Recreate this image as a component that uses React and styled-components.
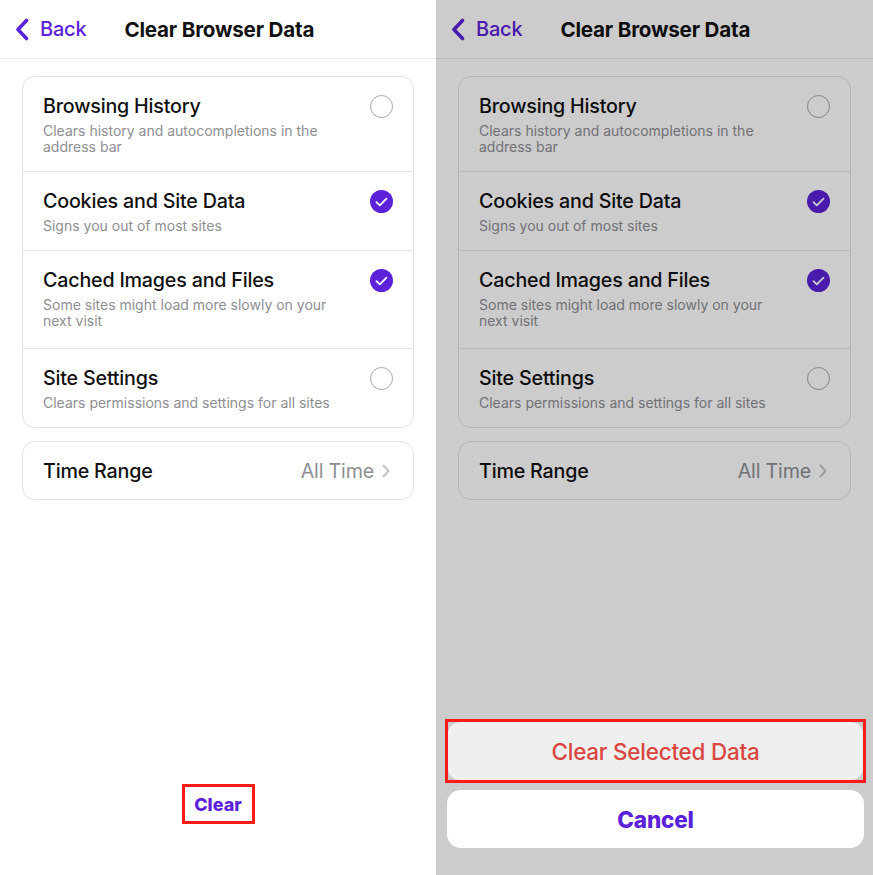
import React from 'react';
import styled, { createGlobalStyle } from 'styled-components';

const purple = '#5b22d9';

const GlobalStyle = createGlobalStyle`
  html, body {
    margin: 0;
    padding: 0;
    background: #ffffff;
    font-family: Inter, "Noto Sans", "Liberation Sans", sans-serif;
    -webkit-font-smoothing: antialiased;
  }
`;

const Page = styled.div`
  display: grid;
  grid-template-columns: 436px 437px;
  width: 873px;
  height: 875px;
  overflow: hidden;
`;

const Screen = styled.div`
  position: relative;
  display: flex;
  flex-direction: column;
  height: 875px;
  background: #ffffff;
  overflow: hidden;
`;

const NavBar = styled.div`
  display: flex;
  align-items: center;
  height: 58px;
  padding-left: 15px;
  border-bottom: 1px solid #ececec;
`;

const BackLink = styled.div`
  display: flex;
  align-items: center;
  gap: 11px;
  color: ${purple};
  font-size: 20px;
  font-weight: 500;
  letter-spacing: -0.2px;
`;

const NavTitle = styled.div`
  margin-left: 38px;
  font-size: 20.6px;
  font-weight: 700;
  color: #111111;
  letter-spacing: -0.2px;
`;

const Content = styled.div`
  display: flex;
  flex-direction: column;
  gap: 13px;
  padding: 17px 22px 0 22px;
`;

const Card = styled.div`
  border: 1px solid #e2e2e2;
  border-radius: 13px;
  background: #ffffff;
  overflow: hidden;
`;

const OptionRow = styled.div`
  display: flex;
  align-items: flex-start;
  padding: 17px 20px ${p => (p.tall ? '19px' : '16px')} 20px;
  & + & {
    border-top: 1px solid #e6e6e6;
  }
`;

const OptionText = styled.div`
  flex: 1;
  display: flex;
  flex-direction: column;
  gap: 5px;
`;

const OptionTitle = styled.div`
  font-size: 19.7px;
  line-height: 24px;
  font-weight: 500;
  color: #111111;
  letter-spacing: -0.2px;
`;

const OptionSub = styled.div`
  font-size: 14px;
  line-height: 16px;
  color: #8e8e93;
  max-width: 290px;
`;

const Check = styled.div`
  flex: none;
  width: 23px;
  height: 23px;
  margin-top: 1px;
  box-sizing: border-box;
  border-radius: 50%;
  border: ${p => (p.checked ? 'none' : '1px solid #a6a6a6')};
  background: ${p => (p.checked ? purple : 'transparent')};
  display: flex;
  align-items: center;
  justify-content: center;
`;

const RangeRow = styled.div`
  display: flex;
  align-items: center;
  height: 57px;
  padding: 0 23px 0 20px;
`;

const RangeValue = styled.div`
  margin-left: auto;
  display: flex;
  align-items: center;
  gap: 8px;
  font-size: 19.7px;
  color: #8e8e93;
  letter-spacing: -0.2px;
`;

const Footer = styled.div`
  margin-top: auto;
  display: flex;
  justify-content: center;
  padding-bottom: 51px;
`;

const ClearButton = styled.div`
  box-sizing: border-box;
  width: 73px;
  height: 40px;
  border: 3px solid #ff1a1a;
  display: flex;
  align-items: center;
  justify-content: center;
  color: ${purple};
  font-size: 18px;
  font-weight: 800;
`;

const Dimmer = styled.div`
  position: absolute;
  inset: 0;
  background: rgba(0, 0, 0, 0.2);
  display: flex;
  flex-direction: column;
  justify-content: flex-end;
  padding: 0 9px 27px 11px;
`;

const Highlight = styled.div`
  border: 3px solid #ff1a1a;
  margin: 0 -2px;
  margin-bottom: 7px;
`;

const SheetButton = styled.div`
  height: 58px;
  border-radius: ${p => (p.cancel ? '14px' : '12px')};
  background: ${p => (p.cancel ? '#ffffff' : '#efefef')};
  display: flex;
  align-items: center;
  justify-content: center;
  font-size: ${p => (p.cancel ? '22.5px' : '22.4px')};
  font-weight: ${p => (p.cancel ? 800 : 500)};
  color: ${p => (p.cancel ? purple : '#d9463f')};
  letter-spacing: -0.2px;
`;

const options = [
  {
    title: 'Browsing History',
    sub: 'Clears history and autocompletions in the address bar',
    checked: false
  },
  { title: 'Cookies and Site Data', sub: 'Signs you out of most sites', checked: true },
  {
    title: 'Cached Images and Files',
    sub: 'Some sites might load more slowly on your next visit',
    checked: true,
    tall: true
  },
  {
    title: 'Site Settings',
    sub: 'Clears permissions and settings for all sites',
    checked: false
  }
];

const ChevronLeft = () => (
  <svg width="14" height="23" viewBox="0 0 14 23">
    <path
      d="M11.5 2.5 L3 11.5 L11.5 20.5"
      fill="none"
      stroke={purple}
      strokeWidth="3.6"
      strokeLinecap="round"
      strokeLinejoin="round"
    />
  </svg>
);

const ChevronRight = () => (
  <svg width="8" height="14" viewBox="0 0 8 14">
    <path
      d="M1.5 1.5 L6.5 7 L1.5 12.5"
      fill="none"
      stroke="#c4c4c7"
      strokeWidth="2"
      strokeLinecap="round"
      strokeLinejoin="round"
    />
  </svg>
);

const Tick = () => (
  <svg width="13" height="10" viewBox="0 0 13 10">
    <path
      d="M1.5 5.2 L4.8 8.4 L11.5 1.6"
      fill="none"
      stroke="#ffffff"
      strokeWidth="1.8"
      strokeLinecap="round"
      strokeLinejoin="round"
    />
  </svg>
);

const SettingsContent = () => (
  <>
    <NavBar>
      <BackLink>
        <ChevronLeft />
        Back
      </BackLink>
      <NavTitle>Clear Browser Data</NavTitle>
    </NavBar>
    <Content>
      <Card>
        {options.map(o => (
          <OptionRow key={o.title} tall={o.tall}>
            <OptionText>
              <OptionTitle>{o.title}</OptionTitle>
              <OptionSub>{o.sub}</OptionSub>
            </OptionText>
            <Check checked={o.checked}>{o.checked && <Tick />}</Check>
          </OptionRow>
        ))}
      </Card>
      <Card>
        <RangeRow>
          <OptionTitle>Time Range</OptionTitle>
          <RangeValue>
            All Time
            <ChevronRight />
          </RangeValue>
        </RangeRow>
      </Card>
    </Content>
  </>
);

export default function App() {
  return (
    <Page>
      <GlobalStyle />
      <Screen>
        <SettingsContent />
        <Footer>
          <ClearButton>Clear</ClearButton>
        </Footer>
      </Screen>
      <Screen>
        <SettingsContent />
        <Dimmer>
          <Highlight>
            <SheetButton>Clear Selected Data</SheetButton>
          </Highlight>
          <SheetButton cancel>Cancel</SheetButton>
        </Dimmer>
      </Screen>
    </Page>
  );
}
